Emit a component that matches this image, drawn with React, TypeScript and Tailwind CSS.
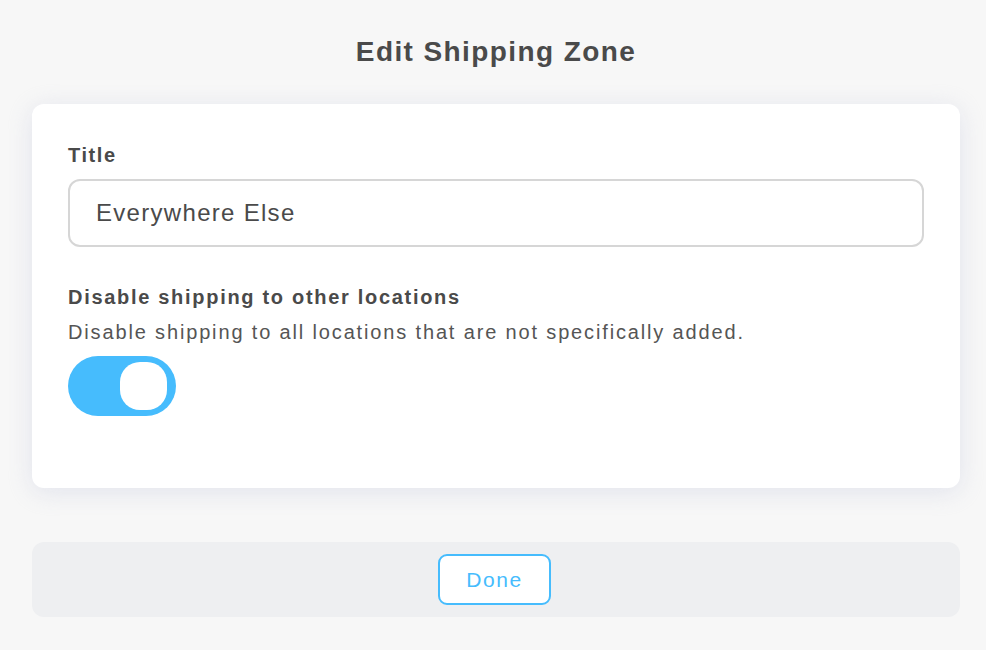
export default function App() {
  return (
    <div className="flex h-[650px] w-[986px] flex-col bg-[#f7f7f7] pl-8 pr-[26px] font-['Liberation_Sans',Arial,sans-serif] text-[#4a4a4a]">
      <h1 className="pt-[34px] text-center text-[28px] font-bold leading-[36px] tracking-[1.4px] text-[#4a4a4a]">
        Edit Shipping Zone
      </h1>

      <div className="mt-[34px] h-[384px] rounded-xl bg-white px-9 pt-[40px] shadow-[0_4px_24px_rgba(200,205,225,0.45)]">
        <div className="text-[20px] font-bold leading-[22px] tracking-[1.6px]">Title</div>
        <div className="mt-[13px] flex h-[68px] items-center rounded-xl border-2 border-[#d6d6d6] px-[26px] text-[24px] tracking-[1.3px]">
          Everywhere Else
        </div>

        <div className="mt-[38px] text-[20px] font-bold leading-[24px] tracking-[1.7px]">
          Disable shipping to other locations
        </div>
        <div className="mt-[11px] text-[20px] leading-[24px] tracking-[1.85px] text-[#555]">
          Disable shipping to all locations that are not specifically added.
        </div>
        <div className="mt-[12px] flex h-[60px] w-[108px] items-center justify-end rounded-full bg-[#46bcfd] pr-[9px]">
          <div className="h-[48px] w-[47px] rounded-[20px] bg-white" />
        </div>
      </div>

      <div className="mt-[54px] flex h-[75px] items-center justify-center rounded-xl bg-[#eeeff1] pr-[3px]">
        <button className="h-[51px] w-[113px] rounded-[9px] border-2 border-[#46bcfd] bg-white text-[21px] tracking-[1.6px] text-[#46bcfd]">
          Done
        </button>
      </div>
    </div>
  );
}
